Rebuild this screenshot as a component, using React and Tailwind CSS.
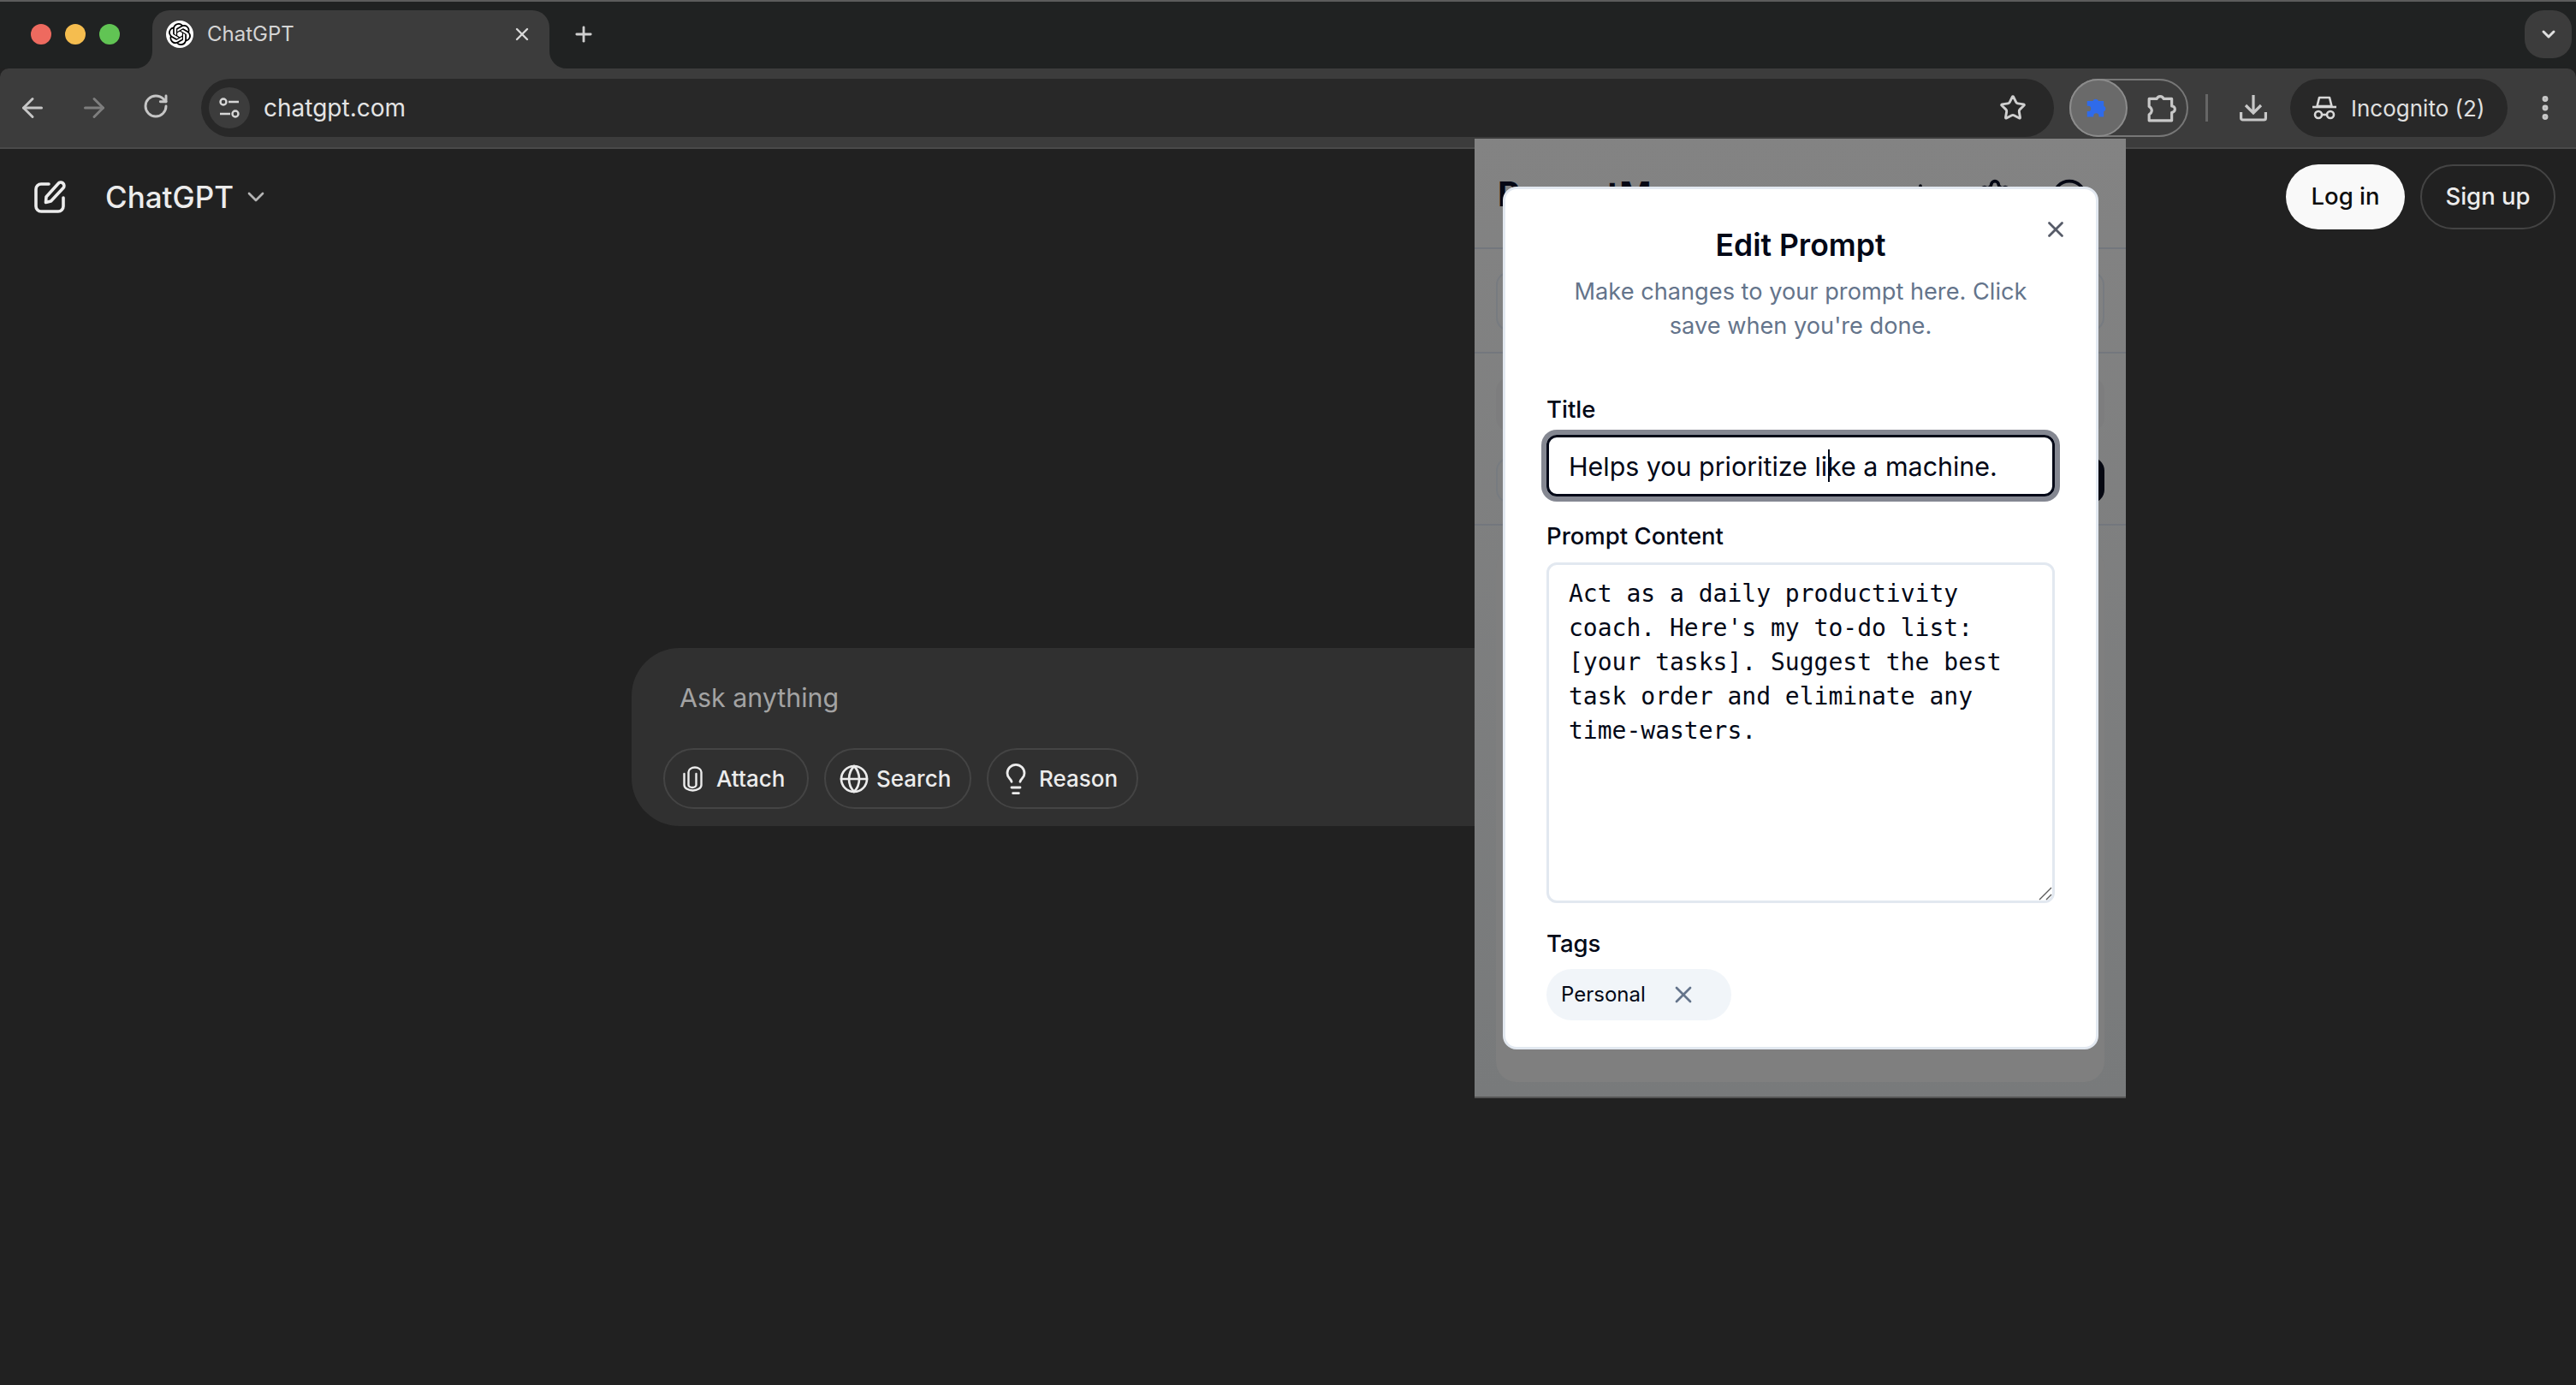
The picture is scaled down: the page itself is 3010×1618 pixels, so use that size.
import { ArrowLeft, ArrowRight, ChevronDown, EllipsisVertical, Globe, Lightbulb, Plus, RotateCw, Settings, Star, X, CircleUser } from "lucide-react"
import { SiOpenai } from "react-icons/si"

const PuzzleShape = ({ className, filled }) => (
  <svg viewBox="0 0 34 34" className={className} fill={filled ? "#2f6bea" : "none"} stroke={filled ? "none" : "#c8c8c8"} strokeWidth="3" strokeLinejoin="round">
    {filled
      ? <path d="M2 8h7.500a4 4 0 0 1 7.500 0h7v6.500a4 4 0 0 1 0 7.500v7h-6.500v-1.500a3.500 3.500 0 0 0-7 0v1.500H2v-7.500h1.500a3.500 3.500 0 0 0 0-7H2z" />
      : <path d="M3 7h8.500a4 4 0 0 1 7.500 0H28v8a3.500 3.500 0 0 1 0 7v9H3v-6.500a6 6 0 0 0 3-4.500 6 6 0 0 0-3-4.500z" />}
  </svg>
)

const Tune = () => (
  <svg viewBox="0 0 26 26" className="w-[26px] h-[26px]" fill="none" stroke="#d6d6d6" strokeWidth="2.400">
    <circle cx="6" cy="6" r="3.500" />
    <path d="M12 6h12M2 20h12" />
    <circle cx="20" cy="20" r="3.500" />
  </svg>
)

const Incognito = () => (
  <svg viewBox="0 0 30 30" className="w-[30px] h-[30px]" fill="none" stroke="#d8d8d8" strokeWidth="2.600" strokeLinejoin="round">
    <path d="M9 3h12l2.500 10h-17z" />
    <path d="M1 14h28" />
    <circle cx="8" cy="23" r="4" />
    <circle cx="22" cy="23" r="4" />
    <path d="M12 23h6" />
  </svg>
)

const DownloadTray = () => (
  <svg viewBox="0 0 32 32" className="w-[32px] h-[32px]" fill="none" stroke="#c8c8c8" strokeWidth="3.200">
    <path d="M16 1v20M7 13l9 9 9-9" />
    <path d="M1.600 21v7a2 2 0 0 0 2 2h24.800a2 2 0 0 0 2-2v-7" />
  </svg>
)

const Clip = () => (
  <svg viewBox="0 0 23 30" className="w-[23px] h-[30px]" fill="none" stroke="#ececec" strokeWidth="2.400" strokeLinecap="round">
    <path d="M1.500 9v13a10 6.500 0 0 0 20 0V7a7.500 5.500 0 0 0-15 0v15a4.500 3 0 0 0 9 0V9" />
  </svg>
)

const NewChat = () => (
  <svg viewBox="0 0 40 40" className="w-[40px] h-[40px]" fill="none" stroke="#ececec" strokeWidth="3.600" strokeLinecap="round" strokeLinejoin="round">
    <path d="M18 5H9a6 6 0 0 0-6 6v20a6 6 0 0 0 6 6h20a6 6 0 0 0 6-6V21" />
    <path d="M15 20 29 4.500a3.800 3.800 0 0 1 6 5L20.500 25l-6 1.500z" />
  </svg>
)

const Flare = ({ className, d }) => (
  <svg viewBox="0 0 20 20" className={`absolute bottom-0 w-[20px] h-[20px] ${className}`}>
    <path d={d} fill="#3c3c3c" />
  </svg>
)

const Pill = ({ icon, label, className }) => (
  <button className={`flex items-center h-[71px] rounded-full border-2 border-[#444444] text-[#ececec] text-[26px] font-medium ${className}`}>
    {icon}
    {label}
  </button>
)

const BrowserChrome = () => (
  <>
    <div className="h-[80px] bg-[#202222] border-t-2 border-[#5c5c5c] flex items-start">
      <div className="flex items-center gap-[16px] pl-[36px] w-[178px] h-[76px]">
        <span className="w-[24px] h-[24px] rounded-full bg-[#ee6a5f]" />
        <span className="w-[24px] h-[24px] rounded-full bg-[#f5bd4f]" />
        <span className="w-[24px] h-[24px] rounded-full bg-[#61c454]" />
      </div>
      <div className="relative mt-[10px] w-[464px] h-[68px] bg-[#3c3c3c] rounded-t-[20px] flex items-center pl-[16px] pr-[20px] pb-[12px]">
        <Flare className="left-[-20px]" d="M20 0v20H0a20 20 0 0 0 20-20z" />
        <Flare className="right-[-20px]" d="M0 0v20h20A20 20 0 0 1 0 0z" />
        <span className="w-[32px] h-[32px] rounded-full bg-white flex items-center justify-center">
          <SiOpenai className="w-[26px] h-[26px] text-black" />
        </span>
        <span className="ml-[16px] text-[24px] text-[#d4d4d4] flex-1">ChatGPT</span>
        <X className="w-[24px] h-[24px] text-[#d8d8d8]" strokeWidth={2.400} />
      </div>
      <Plus className="ml-[26px] mt-[24px] w-[28px] h-[28px] text-[#cfcfcf]" strokeWidth={2.400} />
      <div className="ml-auto mr-[5px] mt-[10px] w-[55px] h-[56px] rounded-[22px] bg-[#3c3c3c] flex items-center justify-center">
        <ChevronDown className="w-[24px] h-[24px] text-[#e0e0e0]" strokeWidth={3} />
      </div>
    </div>

    <div className="h-[94px] bg-[#3c3c3c] border-b-2 border-[#4a4a4a] rounded-t-[10px] flex items-center">
      <div className="flex pl-[2px]">
        <div className="w-[72px] flex justify-center"><ArrowLeft className="w-[36px] h-[36px] text-[#c6c6c6]" strokeWidth={2} /></div>
        <div className="w-[72px] flex justify-center"><ArrowRight className="w-[36px] h-[36px] text-[#7e7e7e]" strokeWidth={2} /></div>
        <div className="w-[72px] flex justify-center"><RotateCw className="w-[32px] h-[32px] text-[#c6c6c6]" strokeWidth={2.200} /></div>
      </div>
      <div className="ml-[17px] w-[2165px] h-[68px] rounded-full bg-[#282828] flex items-center pl-[9px] pr-[32px]">
        <span className="w-[48px] h-[48px] rounded-full bg-[#3c3c3c] flex items-center justify-center"><Tune /></span>
        <span className="ml-[16px] text-[28px] text-[#e4e4e4] flex-1">chatgpt.com</span>
        <Star className="w-[32px] h-[32px] text-[#d0d0d0]" strokeWidth={2.200} />
      </div>
      <div className="ml-[18px] w-[139px] h-[68px] rounded-full border-2 border-[#777777] flex items-center">
        <span className="ml-[-2px] w-[68px] h-[68px] rounded-full bg-[#6a6a6a] border-2 border-[#8c8c8c] flex items-center justify-center">
          <PuzzleShape filled className="w-[30px] h-[30px]" />
        </span>
        <PuzzleShape className="ml-[22px] w-[36px] h-[36px]" />
      </div>
      <div className="ml-[20px] w-[3px] h-[32px] bg-[#666666]" />
      <div className="ml-[37px]"><DownloadTray /></div>
      <div className="ml-[27px] w-[254px] h-[68px] rounded-full bg-[#282828] flex items-center pl-[25px] gap-[16px] text-[26px] text-[#e0e0e0]">
        <Incognito />
        Incognito (2)
      </div>
      <EllipsisVertical className="ml-[26px] w-[36px] h-[36px] text-[#c8c8c8]" strokeWidth={2.600} />
    </div>
  </>
)

const ChatPage = () => (
  <div>
    <div className="h-[112px] flex items-center pl-[39px] pr-[24px]">
      <NewChat />
      <span className="ml-[44px] text-[35px] font-medium text-[#ececec]">ChatGPT</span>
      <ChevronDown className="ml-[10px] w-[32px] h-[32px] text-[#b4b4b4]" strokeWidth={2} />
      <button className="ml-auto w-[139px] h-[76px] rounded-full bg-[#f9f9f9] text-[#0d0d0d] text-[27.500px] font-medium">Log in</button>
      <button className="ml-[18px] w-[158px] h-[76px] rounded-full border-2 border-[#444444] text-[#ececec] text-[27.500px] font-medium">Sign up</button>
    </div>
    <div className="mt-[471px] ml-[738px] w-[1536px] h-[208px] rounded-[56px] bg-[#303030]">
      <div className="pl-[56px] pt-[38px] text-[30.400px] leading-[40px] text-[#a3a3a3]">Ask anything</div>
      <div className="flex gap-[18px] pl-[37px] pt-[39px]">
        <Pill className="w-[170px] pl-[21px] gap-[16px]" icon={<Clip />} label="Attach" />
        <Pill className="w-[172px] pl-[15px] gap-[8px]" icon={<Globe className="w-[36px] h-[36px]" strokeWidth={1.800} />} label="Search" />
        <Pill className="w-[177px] pl-[12px] gap-[7px]" icon={<Lightbulb className="w-[40px] h-[40px]" strokeWidth={1.700} />} label="Reason" />
      </div>
    </div>
  </div>
)

const ExtensionBehind = () => (
  <div className="absolute left-[1723px] top-[162px] w-[761px] h-[1121px] bg-gradient-to-b from-[#838383] to-[#787a7b] border-b-2 border-[#555555]">
    <div className="h-[129px] border-b-2 border-[#73777d] pl-[27px] pr-[44px] pt-[41px] flex items-start">
      <span className="text-[40px] leading-[48px] font-bold text-[#040714]">PromptM</span>
      <div className="ml-auto flex gap-[43px] pt-[5px] text-[#040714]">
        <Plus className="w-[44px] h-[44px]" strokeWidth={2} />
        <Settings className="w-[44px] h-[44px]" strokeWidth={2} />
        <CircleUser className="w-[44px] h-[44px]" strokeWidth={2} />
      </div>
    </div>
    <div className="h-[122px] border-b-2 border-[#73777d] px-[25px] pt-[26px]">
      <div className="h-[70px] rounded-[16px] border-2 border-[#777b80]" />
    </div>
    <div className="h-[201px] border-b-2 border-[#73777d] px-[25px] pt-[28px]">
      <div className="h-[63px] rounded-[16px] bg-[#7d7d7e]" />
      <div className="mt-[30px] flex justify-between h-[54px]">
        <div className="w-[100px] rounded-[16px] border-2 border-[#777b80]" />
        <div className="w-[100px] rounded-[16px] bg-[#060812]" />
      </div>
    </div>
    <div className="px-[25px] pt-[26px]">
      <div className="h-[624px] rounded-[24px] bg-[#7f7f7f]" />
    </div>
  </div>
)

const EditPrompt = () => (
  <div className="absolute left-[1756px] top-[218px] w-[696px] h-[1008px] bg-white border-[3px] border-[#e2e8f0] rounded-[16px] px-[48px] pt-[42px] text-[#020817]">
    <X className="absolute right-[32px] top-[32px] w-[30px] h-[30px] text-[#565b68]" strokeWidth={2.200} />
    <h2 className="text-center text-[35.500px] leading-[48px] font-semibold">Edit Prompt</h2>
    <p className="mt-[10px] text-center text-[27.200px] leading-[40px] text-[#64748b]">Make changes to your prompt here. Click<br />save when you're done.</p>
    <div className="mt-[57px] text-[27.500px] leading-[40px] font-medium">Title</div>
    <div className="relative mt-[10px] h-[72px] rounded-[12px] border-[3px] border-[#020817] ring-[6px] ring-[#848791] flex items-center pl-[23px] pt-[4px] text-[30.400px] text-[#020817]">
      Helps you prioritize like a machine.
      <span className="absolute left-[326px] top-[14px] w-[2px] h-[38px] bg-[#020817]" />
    </div>
    <div className="mt-[26px] text-[27.500px] leading-[40px] font-medium">Prompt Content</div>
    <div className="relative mt-[11px]">
      <textarea
        readOnly
        className="block w-full h-[398px] rounded-[12px] border-[3px] border-[#e2e8f0] pl-[23px] pr-[25px] pt-[14px] text-[28px] leading-[40px] font-['DejaVu_Sans_Mono',monospace] outline-none resize-none"
        defaultValue="Act as a daily productivity coach. Here's my to-do list: [your tasks]. Suggest the best task order and eliminate any time-wasters."
      />
      <svg viewBox="0 0 16 16" className="absolute right-[3px] bottom-[3px] w-[16px] h-[16px]" fill="none" stroke="#5a5a5a" strokeWidth="1.400">
        <path d="M1 15 15 1M9 15l6-6" />
      </svg>
    </div>
    <div className="mt-[27px] text-[27.500px] leading-[40px] font-medium">Tags</div>
    <div className="mt-[10px] w-[216px] h-[60px] rounded-full bg-[#f1f5f9] flex items-center pl-[17px] text-[24px]">
      Personal
      <X className="ml-[28px] w-[32px] h-[32px] text-[#64748b]" strokeWidth={2} />
    </div>
  </div>
)

export default function App() {
  return (
    <div className="relative w-[3010px] h-[1618px] overflow-hidden bg-[#212121] font-['Inter',sans-serif]">
      <BrowserChrome />
      <ChatPage />
      <ExtensionBehind />
      <EditPrompt />
    </div>
  )
}
